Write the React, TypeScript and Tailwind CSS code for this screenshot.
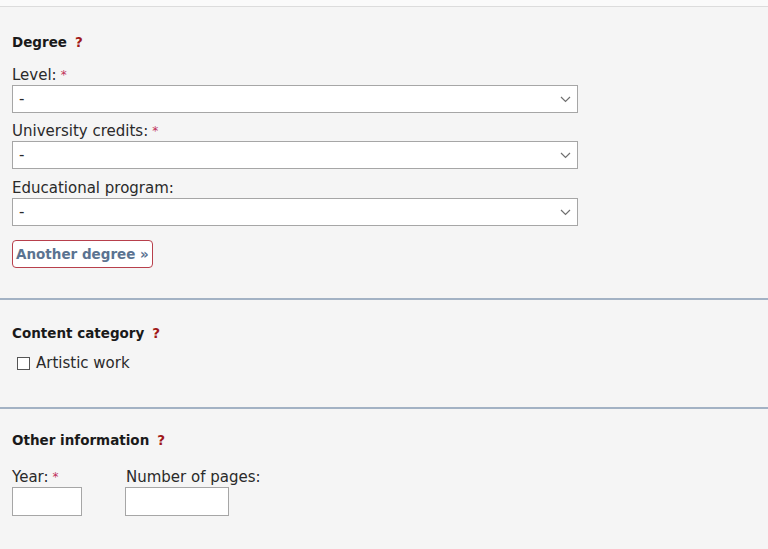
const Chevron = () => (
    <svg width="11" height="7" viewBox="0 0 11 7" className="shrink-0">
        <path d="M1 1 L5.5 5.5 L10 1" fill="none" stroke="#707070" strokeWidth="1.2" />
    </svg>
);

const Req = () => <span className="text-[#c0305a] text-[12px] align-top ml-1">*</span>;

const Help = () => <span className="text-[#a01818] font-bold ml-2">?</span>;

const SelectBox = () => (
    <div className="w-[566px] h-[28px] bg-white border border-[#a6a6a6] flex items-center justify-between pl-[6px] pr-[6px]">
        <span>-</span>
        <Chevron />
    </div>
);

const App = () => {
    const fields = [
        { label: "Level:", req: true, top: "mt-[17px]" },
        { label: "University credits:", req: true, top: "mt-[10px]" },
        { label: "Educational program:", req: false, top: "mt-[11px]" },
    ];

    return (
        <div className="w-[768px] h-[549px] bg-[#f5f5f5] text-[15px] leading-[16px] text-[#2a2a2a] overflow-hidden" style={{ fontFamily: '"DejaVu Sans", Verdana, sans-serif' }}>
            <div className="h-[7px] bg-[#fafafa] border-b border-[#dcdcdc]"></div>

            {/* Degree */}
            <div className="px-3 pt-[27px] pb-[30px] border-b-2 border-[#a3b2c4]">
                <h2 className="font-bold text-[13.5px] text-[#1a1a1a]">Degree<Help /></h2>
                {fields.map((f, i) => (
                    <div key={i} className={f.top}>
                        <label className="block mb-[2px]">{f.label}{f.req && <Req />}</label>
                        <SelectBox />
                    </div>
                ))}
                <button className="mt-[14px] h-[28px] px-[3px] bg-white border border-[#b8404c] rounded-[4px] font-bold text-[13.5px] text-[#5b7391]">
                    Another degree »
                </button>
            </div>

            {/* Content category */}
            <div className="px-3 pt-[25px] pb-[36px] border-b-2 border-[#a3b2c4]">
                <h2 className="font-bold text-[13.5px] text-[#1a1a1a]">Content category<Help /></h2>
                <label className="flex items-center mt-[14px] ml-[5px]">
                    <span className="w-[13px] h-[13px] border border-[#555] bg-white inline-block"></span>
                    <span className="ml-[6px]">Artistic work</span>
                </label>
            </div>

            {/* Other information */}
            <div className="px-3 pt-[23px]">
                <h2 className="font-bold text-[13.5px] text-[#1a1a1a]">Other information<Help /></h2>
                <div className="flex gap-[43px] mt-[21px]">
                    <div>
                        <label className="block mb-[2px]">Year:<Req /></label>
                        <div className="w-[70px] h-[29px] bg-white border border-[#a6a6a6]"></div>
                    </div>
                    <div>
                        <label className="block mb-[2px] ml-px">Number of pages:</label>
                        <div className="w-[104px] h-[29px] bg-white border border-[#a6a6a6]"></div>
                    </div>
                </div>
            </div>
        </div>
    );
};

export default App;
